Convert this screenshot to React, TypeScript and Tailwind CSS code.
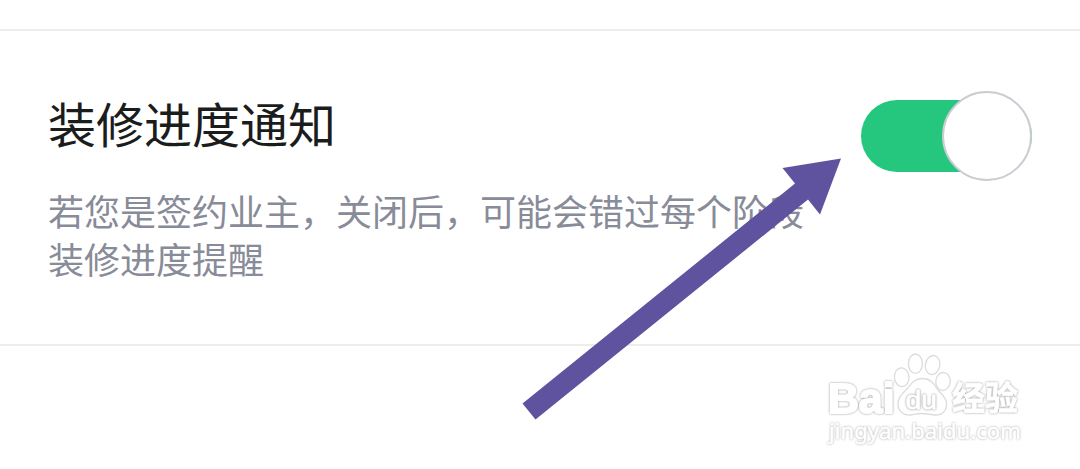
import React, { useState } from "react";

const PAW_TOES = [
  { cx: 901.7, cy: 377.3, rx: 7.3, ry: 9.4, angle: -6 },
  { cx: 915.4, cy: 363.7, rx: 7, ry: 9.7, angle: 0 },
  { cx: 932.6, cy: 365, rx: 7.2, ry: 9.6, angle: 12 },
  { cx: 943, cy: 381.5, rx: 7.2, ry: 9, angle: 6 },
];

function Toggle({
  checked,
  onChange,
}: {
  checked: boolean;
  onChange: (value: boolean) => void;
}) {
  return (
    <button
      type="button"
      role="switch"
      aria-checked={checked}
      aria-label="装修进度通知"
      onClick={() => onChange(!checked)}
      className={`mt-[5px] flex h-[72px] w-[171px] shrink-0 items-center rounded-full ${
        checked ? "justify-end bg-[#25c77f]" : "justify-start bg-gray-200"
      }`}
    >
      <span className="size-[90px] shrink-0 rounded-full border-2 border-[#cbccd2] bg-white" />
    </button>
  );
}

function Arrow() {
  return (
    <path
      d="M841 158.5 782.5 168 795 183.5 522.5 403.5 535.5 419.5 808 199.5 820 214.5Z"
      fill="#5f529f"
    />
  );
}

// White lettering on white: the halo is what makes the shapes readable.
function Watermark() {
  return (
    <g fill="#fff" stroke="#fff" strokeLinejoin="round">
      <g stroke="#dcdcdc" strokeWidth="1.3">
        {PAW_TOES.map((toe) => (
          <ellipse
            key={toe.cx}
            cx={toe.cx}
            cy={toe.cy}
            rx={toe.rx}
            ry={toe.ry}
            transform={`rotate(${toe.angle} ${toe.cx} ${toe.cy})`}
          />
        ))}
        <path d="M922 378.5C913 378.5 910 386 906 390C901 395 898 398 898 404C898 411 903 415.5 910 415C914 414.5 918 413.5 922 413.5C927 413.5 931 415 936 415C943 415 947 410 946.5 403C946 397 941 394 938 390C934 384 931 378.5 922 378.5Z" />
      </g>
      <text
        x="828"
        y="412.5"
        textLength="66.5"
        lengthAdjust="spacingAndGlyphs"
        strokeWidth="2"
        className="font-['Liberation_Sans',sans-serif] text-[42px] font-bold [filter:drop-shadow(0_0_1px_#999)]"
      >
        Bai
      </text>
      <text
        x="905.5"
        y="408.5"
        textLength="31.5"
        lengthAdjust="spacingAndGlyphs"
        strokeWidth="0.8"
        className="font-['Liberation_Sans',sans-serif] text-[26px] [filter:drop-shadow(0_0_0.9px_#888)]"
      >
        du
      </text>
      <text
        x="952"
        y="410"
        textLength="66"
        lengthAdjust="spacingAndGlyphs"
        strokeWidth="0.8"
        className="font-['Noto_Sans_CJK_SC',sans-serif] text-[33px] font-bold [filter:drop-shadow(0_0_1px_#999)]"
      >
        经验
      </text>
      <text
        x="829"
        y="439"
        textLength="192"
        lengthAdjust="spacingAndGlyphs"
        strokeWidth="0.5"
        className="font-['Noto_Sans',sans-serif] text-[22px] [filter:drop-shadow(0_0_0.9px_#aaa)]"
      >
        jingyan.baidu.com
      </text>
    </g>
  );
}

export default function App() {
  const [enabled, setEnabled] = useState(true);

  return (
    <main className="relative h-[469px] w-[1080px] overflow-hidden bg-white pt-[29px] font-['Noto_Sans_CJK_SC',sans-serif]">
      <section className="flex h-[317px] items-start justify-between border-y-2 border-[#ededed] px-12 pt-16">
        <div className="w-[770px]">
          <h1 className="text-[48px] leading-[54px] text-[#1b1c1c]">
            装修进度通知
          </h1>
          <p className="mt-[37px] text-[36px] leading-[48px] text-[#888b98]">
            若您是签约业主，关闭后，可能会错过每个阶段
            <br />
            装修进度提醒
          </p>
        </div>
        <Toggle checked={enabled} onChange={setEnabled} />
      </section>

      <svg
        viewBox="0 0 1080 469"
        aria-hidden="true"
        className="pointer-events-none absolute inset-0 h-[469px] w-[1080px]"
      >
        <Watermark />
        <Arrow />
      </svg>
    </main>
  );
}
